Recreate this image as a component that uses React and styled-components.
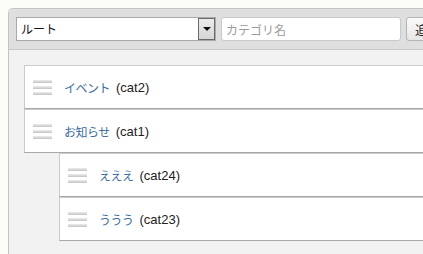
import React from 'react'
import styled, { createGlobalStyle } from 'styled-components'

const Global = createGlobalStyle`
  html, body {
    margin: 0;
    background: #fcfcf8;
    overflow: hidden;
  }
  body {
    font-family: "Liberation Sans", "Noto Sans CJK JP", sans-serif;
    font-size: 12px;
    color: #222;
  }
`;

const Page = styled.div`
  padding: 8px 0 0 8px;
  height: 254px;
  box-sizing: border-box;
`;

const Panel = styled.div`
  width: 480px;
  height: 100%;
  box-sizing: border-box;
  border: 1px solid #c4c4c4;
  border-right: none;
  border-bottom: none;
  border-top-left-radius: 5px;
  background: #f2f2f2;
  display: flex;
  flex-direction: column;
`;

const Toolbar = styled.div`
  display: flex;
  align-items: center;
  gap: 5px;
  padding: 8px 7px;
  background: #dedfde;
  border-bottom: 1px solid #c8c8c8;
  border-top-left-radius: 5px;
`;

const Select = styled.div`
  display: flex;
  width: 200px;
  height: 24px;
  box-sizing: border-box;
  border: 1px solid #a9a9a9;
  background: #fff;
`;

const SelectValue = styled.div`
  flex: 1;
  padding-left: 4px;
  line-height: 22px;
  font-family: "Noto Sans CJK JP", sans-serif;
  font-size: 12px;
  color: #111;
`;

const SelectArrow = styled.div`
  width: 17px;
  box-sizing: border-box;
  border: 1px solid #6a6a6a;
  background: linear-gradient(#ececec, #d6d6d6);
  display: flex;
  align-items: center;
  justify-content: center;
  &::after {
    content: "";
    border-left: 4px solid transparent;
    border-right: 4px solid transparent;
    border-top: 4px solid #111;
  }
`;

const TextInput = styled.input`
  width: 180px;
  height: 24px;
  box-sizing: border-box;
  border: 1px solid #c9c9c9;
  border-radius: 3px;
  padding: 0 4px;
  font-family: "Noto Sans CJK JP", sans-serif;
  font-size: 12px;
  background: #fff;
  &::placeholder {
    color: #9a9a9a;
  }
`;

const Button = styled.button`
  height: 24px;
  padding: 0 8px;
  border: 1px solid #b4b4b4;
  border-radius: 3px;
  background: linear-gradient(#fbfbfb, #e6e6e6);
  font-family: "Noto Sans CJK JP", sans-serif;
  font-size: 12px;
  color: #222;
`;

const Content = styled.div`
  flex: 1;
  padding: 15px 0 0 15px;
`;

const List = styled.div`
  display: flex;
  flex-direction: column;
  margin-left: ${p => p.$indent || 0}px;
`;

const Row = styled.div`
  display: flex;
  align-items: center;
  height: 42px;
  padding-left: 8px;
  background: #fff;
  border: 1px solid #cbcbcb;
  border-right: none;
  border-bottom-color: #a8a8a8;
`;

const Handle = styled.div`
  display: flex;
  flex-direction: column;
  gap: 3px;
  width: 19px;
  margin-right: 12px;
  span {
    height: 3px;
    background: linear-gradient(#ededed, #c4c4c4);
  }
`;

const Name = styled.a`
  font-family: "Noto Sans CJK JP", sans-serif;
  font-size: 12px;
  letter-spacing: -0.5px;
  color: #3b6c9c;
  text-decoration: none;
`;

const Code = styled.span`
  margin-left: 6px;
  font-size: 13px;
  color: #222;
`;

const Item = ({ name, code }) => (
  <Row>
    <Handle><span /><span /><span /></Handle>
    <Name href="#">{name}</Name>
    <Code>({code})</Code>
  </Row>
)

export default function App() {
  return (
    <>
      <Global />
      <Page>
        <Panel>
          <Toolbar>
            <Select>
              <SelectValue>ルート</SelectValue>
              <SelectArrow />
            </Select>
            <TextInput placeholder="カテゴリ名" />
            <Button>追加</Button>
          </Toolbar>
          <Content>
            <List>
              <Item name="イベント" code="cat2" />
              <Item name="お知らせ" code="cat1" />
              <List $indent={35}>
                <Item name="えええ" code="cat24" />
                <Item name="ううう" code="cat23" />
              </List>
            </List>
          </Content>
        </Panel>
      </Page>
    </>
  )
}
